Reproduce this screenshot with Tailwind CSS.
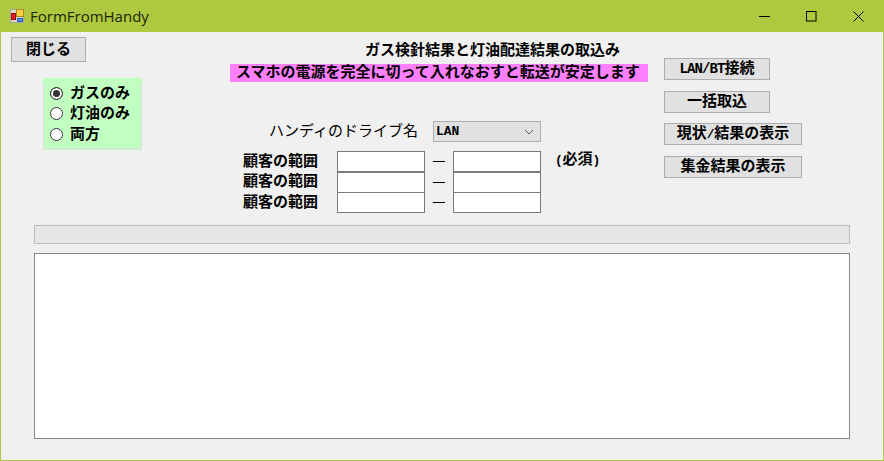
<!DOCTYPE html>
<html lang="ja">
<head>
    <meta charset="UTF-8">
    <title>FormFromHandy</title>
    <script src="https://cdn.jsdelivr.net/npm/@tailwindcss/browser@4"></script>
</head>
<body class="bg-[#f0f0f0]">
    <div class="w-[884px] h-[461px] flex flex-col overflow-hidden border-x border-b border-[#aec93f] font-['Liberation_Mono','Noto_Sans_CJK_JP',monospace] font-bold text-[15px] text-black">

        <!-- title bar -->
        <div class="-mx-px h-8 flex items-center bg-[#aec93f] shrink-0">
            <svg class="ml-[10px] w-[14px] h-[14px]" viewBox="0 0 14 14">
                <rect x="0.5" y="0.5" width="13" height="13" fill="#d8d8c8" stroke="#a8a8a0"/>
                <rect x="6.5" y="0.5" width="7" height="7" fill="#f8d040" stroke="#b08820"/>
                <rect x="1.5" y="4.5" width="4" height="6" fill="#e02020" stroke="#901010"/>
                <rect x="7.5" y="9.5" width="5" height="3" fill="#5090e8" stroke="#3060b0"/>
            </svg>
            <span class="ml-[6px] font-['Open_Sans',sans-serif] font-normal text-[15px] text-[#1c2408]">FormFromHandy</span>
            <div class="ml-auto mr-[2px] flex">
                <div class="w-[47px] h-8 flex items-center justify-center">
                    <svg class="w-[11px] h-[11px]" viewBox="0 0 11 11"><path d="M0 5.5H11" stroke="#000" fill="none"/></svg>
                </div>
                <div class="w-[47px] h-8 flex items-center justify-center">
                    <svg class="w-[11px] h-[11px]" viewBox="0 0 11 11"><rect x="0.5" y="0.5" width="9.5" height="9.5" stroke="#000" fill="none"/></svg>
                </div>
                <div class="w-[47px] h-8 flex items-center justify-center">
                    <svg class="w-[11px] h-[11px]" viewBox="0 0 11 11"><path d="M0.5 0.5L10.5 10.5M10.5 0.5L0.5 10.5" stroke="#000" fill="none"/></svg>
                </div>
            </div>
        </div>

        <!-- top controls -->
        <div class="flex h-[193px] shrink-0 pl-[10px]">
            <div class="w-[131px] shrink-0 pt-[5px]">
                <button class="w-[75px] h-[25px] pt-px bg-[#e1e1e1] border border-[#adadad] leading-none">閉じる</button>
                <div class="ml-8 mt-4 w-[99px] h-[72px] bg-[#c0ffc0] pt-[7px]">
                    <div class="h-[64px] border border-[#dcdcdc] px-[3px]">
                        <div class="-mt-[3px] h-[62px] bg-[#c0ffc0] flex flex-col">
                            <label class="h-[20px] flex items-center gap-[7px] pl-[3px]"><input type="radio" name="kind" checked class="appearance-none w-[13px] h-[13px] rounded-full border border-[#333] bg-white shadow-[inset_0_0_0_2px_white] checked:bg-[#333]"><span class="pt-[4px]">ガスのみ</span></label>
                            <label class="h-[21px] flex items-center gap-[7px] pl-[3px]"><input type="radio" name="kind" class="appearance-none w-[13px] h-[13px] rounded-full border border-[#333] bg-white"><span class="pt-[4px]">灯油のみ</span></label>
                            <label class="h-[21px] flex items-center gap-[7px] pl-[3px]"><input type="radio" name="kind" class="appearance-none w-[13px] h-[13px] rounded-full border border-[#333] bg-white"><span class="pt-[4px]">両方</span></label>
                        </div>
                    </div>
                </div>
            </div>

            <div class="ml-[88px] w-[418px] shrink-0 flex flex-col">
                <div class="mt-[12px] h-4 leading-4 pl-[135px] whitespace-nowrap">ガス検針結果と灯油配達結果の取込み</div>
                <div class="mt-[4px] h-[18px] leading-[20px] bg-[#ff80ff] pl-[6px] whitespace-nowrap">スマホの電源を完全に切って入れなおすと転送が安定します</div>
                <div class="mt-[39px] h-[21px] flex items-center">
                    <span class="ml-[39px] w-[164px] pt-[3px] whitespace-nowrap font-normal">ハンディのドライブ名</span>
                    <div class="w-[108px] h-[21px] bg-[#e1e1e1] border border-[#adadad] flex items-center justify-between pl-[2px] pr-[6px]">
                        <span class="text-[13px]">LAN</span>
                        <svg class="w-[10px] h-[6px]" viewBox="0 0 10 6"><path d="M1 1L5 5L9 1" stroke="#606060" fill="none"/></svg>
                    </div>
                </div>
                <div class="mt-[9px] grid grid-cols-[107px_88px_28px_88px_auto] grid-rows-[21px_20px_21px] items-center">
                    <span class="pl-[13px] pt-[3px]">顧客の範囲</span>
                    <input class="w-[88px] h-[21px] bg-white border border-[#7a7a7a]">
                    <span class="text-center font-normal font-['Noto_Sans_CJK_JP',sans-serif] pb-[2px]">—</span>
                    <input class="w-[88px] h-[21px] bg-white border border-[#7a7a7a]">
                    <span class="pl-[14px] whitespace-nowrap"><span class="text-[13px] tracking-[-0.3px]">(</span>必須<span class="text-[13px] tracking-[-0.3px]">)</span></span>

                    <span class="pl-[13px] pt-[3px]">顧客の範囲</span>
                    <input class="w-[88px] h-[21px] bg-white border border-[#7a7a7a]">
                    <span class="text-center font-normal font-['Noto_Sans_CJK_JP',sans-serif] pb-[2px]">—</span>
                    <input class="w-[88px] h-[21px] bg-white border border-[#7a7a7a]">
                    <span></span>

                    <span class="pl-[13px] pt-[3px]">顧客の範囲</span>
                    <input class="w-[88px] h-[21px] bg-white border border-[#7a7a7a]">
                    <span class="text-center font-normal font-['Noto_Sans_CJK_JP',sans-serif] pb-[2px]">—</span>
                    <input class="w-[88px] h-[21px] bg-white border border-[#7a7a7a]">
                    <span></span>
                </div>
            </div>

            <div class="ml-[16px] pt-[26px] flex flex-col items-start">
                <button class="w-[106px] h-[22px] pt-px bg-[#e1e1e1] border border-[#adadad] leading-none"><span class="text-[14px] tracking-[-0.9px]">LAN/BT</span>接続</button>
                <button class="mt-[11px] w-[106px] h-[22px] pt-px bg-[#e1e1e1] border border-[#adadad] leading-none">一括取込</button>
                <button class="mt-[10px] w-[138px] h-[22px] pt-px bg-[#e1e1e1] border border-[#adadad] leading-none">現状<span class="text-[13px] tracking-[-0.3px]">/</span>結果の表示</button>
                <button class="mt-[11px] w-[138px] h-[22px] pt-px bg-[#e1e1e1] border border-[#adadad] leading-none">集金結果の表示</button>
            </div>
        </div>

        <!-- progress and log -->
        <div class="pl-[33px] flex flex-col">
            <div class="w-[816px] h-[19px] bg-[#e6e6e6] border border-[#bcbcbc]"></div>
            <textarea class="mt-[9px] w-[816px] h-[186px] bg-white border border-[#828790] resize-none"></textarea>
        </div>
    </div>
</body>
</html>
